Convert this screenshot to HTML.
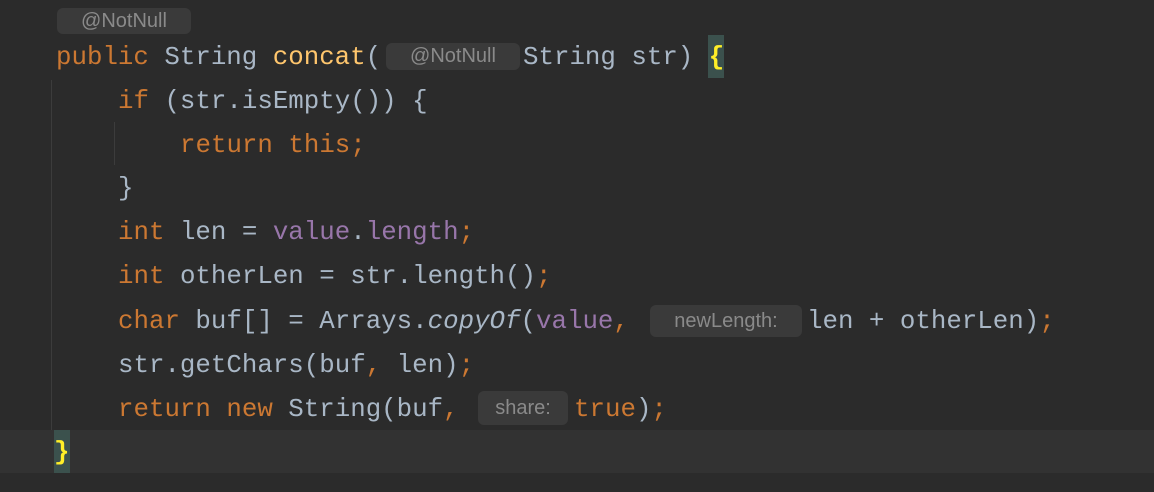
<!DOCTYPE html>
<html><head><style>
html,body{margin:0;padding:0;background:#2b2b2b;width:1154px;height:492px;overflow:hidden}
.l{position:absolute;font-family:"Liberation Mono",monospace;font-size:25.8px;color:#a9b7c6;white-space:pre;line-height:44px;height:44px}
.k{color:#cc7832}.m{color:#ffc66d}.f{color:#9876aa}.i{font-style:italic}
.h{position:absolute;background:#3a3a3a;border-radius:6px;color:#8a8a8a;font-family:"Liberation Sans",sans-serif;font-size:20px;text-align:center}
.g{position:absolute;width:1px;background:#3c3c3c}
</style></head><body>
<div style="position:absolute;left:0;top:430px;width:1154px;height:43px;background:#323232"></div>
<div class="g" style="left:51px;top:80px;height:350px"></div>
<div class="g" style="left:114px;top:122px;height:43px"></div>
<div class="h" style="left:57px;top:8px;width:134px;height:26px;line-height:26px">@NotNull</div>
<div class="l" style="left:56px;top:36px"><span class="k">public </span>String <span class="m">concat</span>(</div>
<div class="h" style="left:386px;top:43px;width:134px;height:27px;line-height:27px">@NotNull</div>
<div style="position:absolute;left:708px;top:35px;width:16px;height:43px;background:#3b514d"></div>
<div class="l" style="left:523px;top:36px">String str) <span style="color:#ffef28;font-weight:bold">{</span></div>
<div class="l" style="left:118px;top:80px"><span class="k">if </span>(str.isEmpty()) {</div>
<div class="l" style="left:180px;top:124px"><span class="k">return this;</span></div>
<div class="l" style="left:118px;top:167px">}</div>
<div class="l" style="left:118px;top:211px"><span class="k">int </span>len = <span class="f">value</span>.<span class="f">length</span><span class="k">;</span></div>
<div class="l" style="left:118px;top:255px"><span class="k">int </span>otherLen = str.length()<span class="k">;</span></div>
<div class="l" style="left:118px;top:300px"><span class="k">char </span>buf[] = Arrays.<span class="i">copyOf</span>(<span class="f">value</span><span class="k">,</span></div>
<div class="h" style="left:650px;top:305px;width:152px;height:32px;line-height:32px">newLength:</div>
<div class="l" style="left:807px;top:300px">len + otherLen)<span class="k">;</span></div>
<div class="l" style="left:118px;top:344px">str.getChars(buf<span class="k">, </span>len)<span class="k">;</span></div>
<div class="l" style="left:118px;top:388px"><span class="k">return new </span>String(buf<span class="k">,</span></div>
<div class="h" style="left:478px;top:391px;width:90px;height:34px;line-height:34px">share:</div>
<div class="l" style="left:574px;top:388px"><span class="k">true</span>)<span class="k">;</span></div>
<div style="position:absolute;left:54px;top:430px;width:16px;height:43px;background:#3b514d"></div>
<div class="l" style="left:54px;top:431px;color:#ffef28;font-weight:bold">}</div>
</body></html>
